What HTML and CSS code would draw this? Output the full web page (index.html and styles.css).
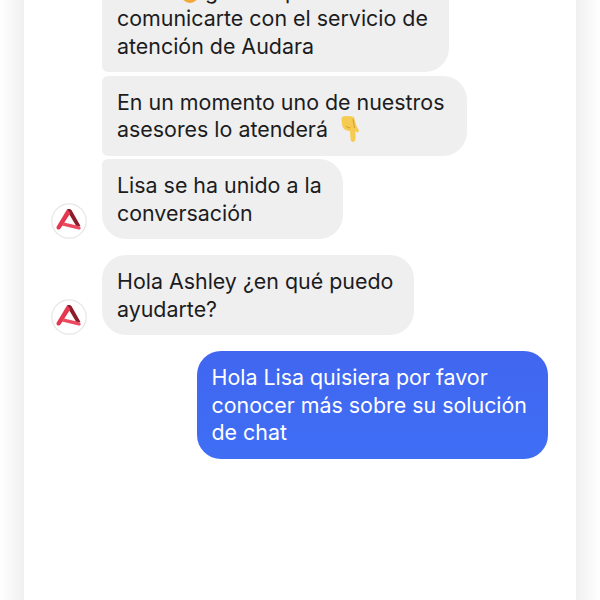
FILE: index.html
```html
<!DOCTYPE html>
<html lang="es">
<head>
<meta charset="utf-8">
<title>Chat</title>
<link rel="stylesheet" href="styles.css">
</head>
<body>
<main class="phone">
  <div class="thread">
    <div class="row first">
      <div class="bubble in top">Hola! <svg class="smile" viewBox="0 0 20 20"><circle cx="10" cy="10" r="10" fill="#f2a93b"/></svg> gracias por<br>comunicarte con el servicio de<br>atención de Audara</div>
    </div>
    <div class="row near">
      <div class="bubble in mid">En un momento uno de nuestros<br>asesores lo atenderá <svg class="hand" viewBox="0 0 18 26"><path d="M1 1 C4 -.5 9 0 13 1 C14 5 15 10 17.5 13.5 C19 16 16 17.5 14.5 15 L14.5 23 C14 27 10 27 9.5 23 L9 15 C5 15 1.5 13 1 8 C.8 5 0 3 1 1 Z" fill="#f6cb52"/><path d="M12 3 L13.5 12 M5 10 C6.5 12 8 12 9.5 11.5" stroke="#d89a2c" stroke-width="1" fill="none"/></svg></div>
    </div>
    <div class="row near">
      <svg class="avatar" viewBox="0 0 36 36"><circle cx="18" cy="18" r="17.2" fill="#fff" stroke="#e6e6e6" stroke-width="1.2"/><path d="M16 6.5 C18 5.5 20 6 21 8 L29.5 23 L25.5 23.5 L17.5 10 Z" fill="#8c1c2c"/><path d="M16 6.5 L5.5 24 C5 26.5 8 27.5 9.5 25.5 L19.5 10 Z" fill="#e5384f"/><path d="M13 19.5 L28 23 C30.5 24 30 27 27.5 26.5 L11 22.5 Z" fill="#ec4a60"/></svg>
      <div class="bubble in end">Lisa se ha unido a la<br>conversación</div>
    </div>
    <div class="row far">
      <svg class="avatar" viewBox="0 0 36 36"><circle cx="18" cy="18" r="17.2" fill="#fff" stroke="#e6e6e6" stroke-width="1.2"/><path d="M16 6.5 C18 5.5 20 6 21 8 L29.5 23 L25.5 23.5 L17.5 10 Z" fill="#8c1c2c"/><path d="M16 6.5 L5.5 24 C5 26.5 8 27.5 9.5 25.5 L19.5 10 Z" fill="#e5384f"/><path d="M13 19.5 L28 23 C30.5 24 30 27 27.5 26.5 L11 22.5 Z" fill="#ec4a60"/></svg>
      <div class="bubble in">Hola Ashley ¿en qué puedo<br>ayudarte?</div>
    </div>
    <div class="row far out-row">
      <div class="bubble out">Hola Lisa quisiera por favor<br>conocer más sobre su solución<br>de chat</div>
    </div>
  </div>
</main>
</body>
</html>
```
FILE: styles.css
```css
* { box-sizing: border-box; }
html, body { margin: 0; height: 100%; overflow: hidden; background: #fff; }
body { display: flex; justify-content: center; background: linear-gradient(90deg, #fff 0, #f0f0f0 24px, #fff 24px, #fff 576px, #f0f0f0 576px, #fff 600px); }
.phone { width: 552px; height: 600px; background: #fff; overflow: hidden; position: relative; }
.thread { display: flex; flex-direction: column; margin-top: -35.5px; padding: 0 28px 0 27px; font: 400 21.4px/27.5px Inter, sans-serif; color: #1c1c1e; }
.row { display: flex; align-items: flex-end; padding-left: 51px; }
.near { margin-top: 3.5px; }
.far { margin-top: 16px; }
.avatar { width: 36px; height: 36px; margin-left: -51px; margin-right: 15px; flex: none; }
.bubble { padding: 13px 21px 12px 15px; border-radius: 24px; white-space: nowrap; }
.in { background: #efefef; }
.top { border-radius: 24px 24px 24px 6px; }
.mid { border-radius: 6px 24px 24px 6px; padding-right: 23px; }
.end { border-radius: 6px 24px 24px 24px; }
.out-row { justify-content: flex-end; padding-left: 0; }
.out { background: linear-gradient(180deg, #4166f0, #3f6ef5); color: #fff; }
.hand { width: 18px; height: 26px; vertical-align: 1px; margin: -6px 0 -6px 7px; }
.smile { width: 18px; height: 18px; vertical-align: 0; margin: -4px 0 -4px 6px; }
```
